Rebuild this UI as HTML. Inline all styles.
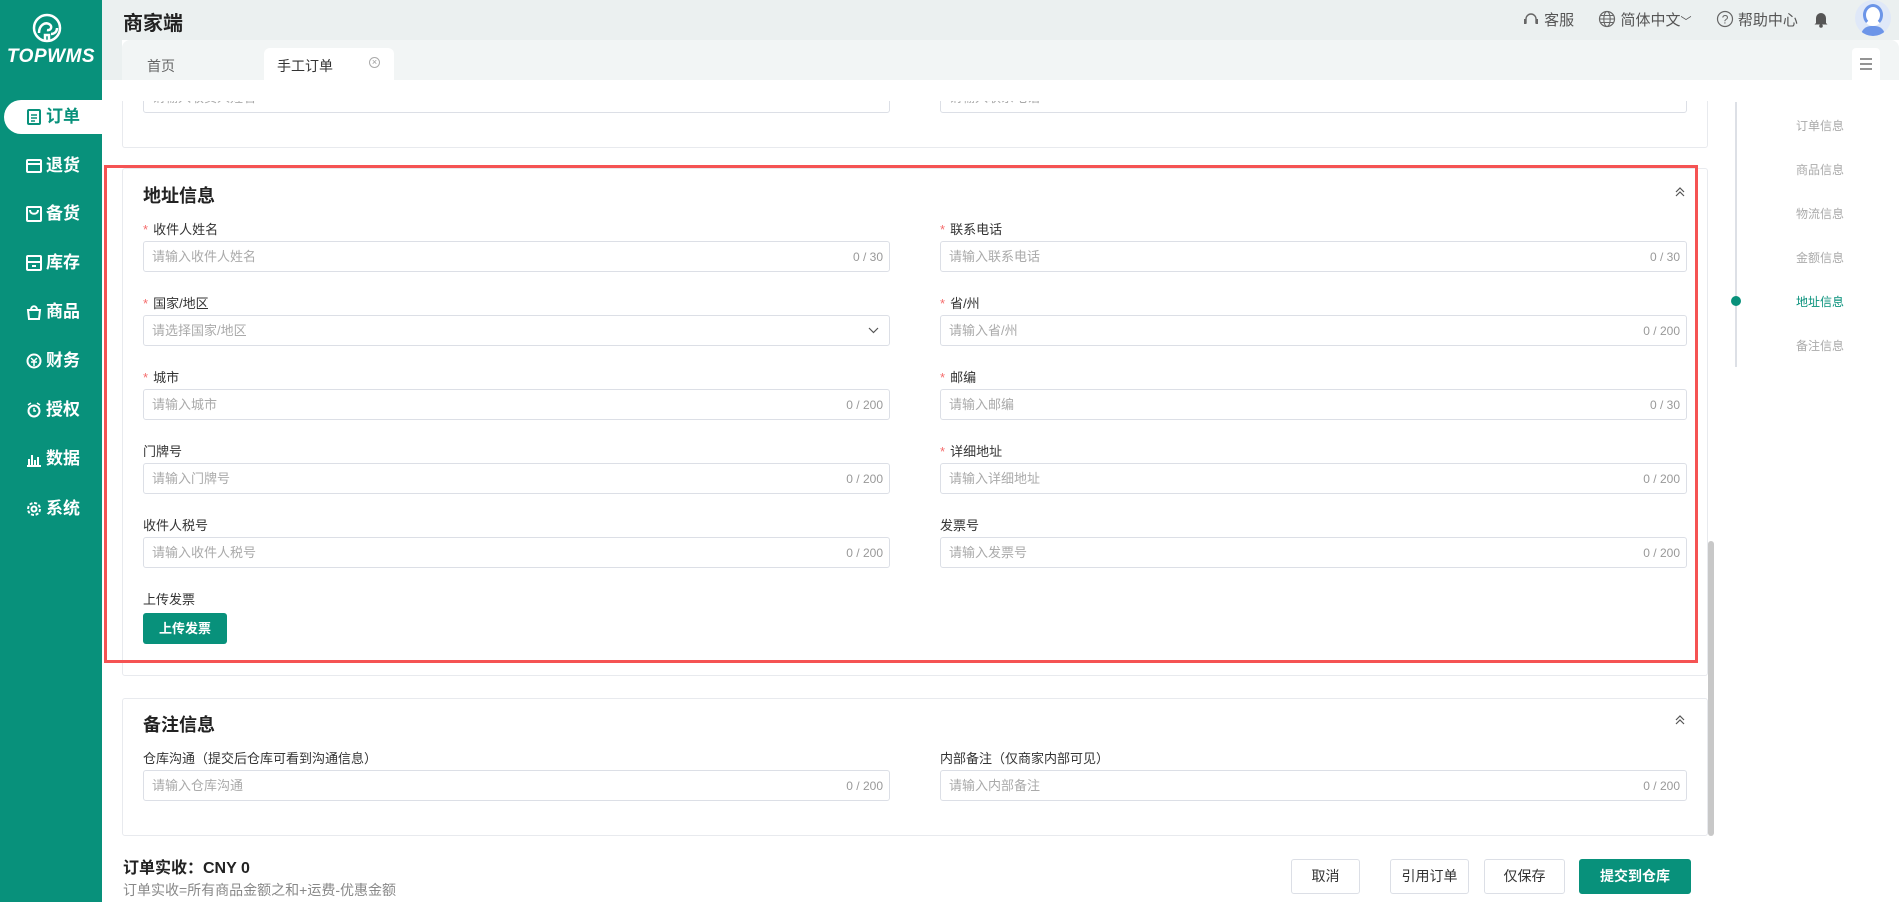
<!DOCTYPE html>
<html><head><meta charset="utf-8"><style>
*{box-sizing:border-box;margin:0;padding:0}
body{width:1899px;height:902px;overflow:hidden;position:relative;background:#fff;font-family:"Liberation Sans","Noto Sans CJK SC",sans-serif;color:#333;font-size:14px}
.abs{position:absolute}
#side{left:0;top:0;width:102px;height:902px;background:#08917b}
.mi{position:absolute;left:0;width:102px;height:34px;color:#fff;font-weight:bold;font-size:17px;line-height:34px;padding-left:26px}
.mi svg{vertical-align:-3px;margin-right:4px}
.mi.act{left:4px;width:98px;background:#fff;color:#08917b;border-radius:17px 0 0 17px;padding-left:22px}
#hdr{left:102px;top:0;width:1797px;height:40px;background:#ebf0f0}
.card{position:absolute;border:1px solid #e8eaee;border-radius:3px;background:#fff}
.lbl{position:absolute;font-size:13px;color:#333}
.lbl b{color:#f56c6c;font-weight:normal;margin-right:5px}
.inp{position:absolute;height:31px;border:1px solid #dcdfe6;border-radius:3px;font-size:13px;color:#aaa;line-height:29px;padding-left:8px}
.inp span{position:absolute;right:6px;font-size:12px;color:#999;top:1px}
.btn{position:absolute;height:35px;border:1px solid #dcdfe6;border-radius:3px;background:#fff;font-size:14px;text-align:center;line-height:33px;color:#333}
.nav{position:absolute;left:1796px;font-size:12px;color:#aaa}
</style></head><body>
<div id="side" class="abs">
 <svg class="abs" style="left:31px;top:13px" width="40" height="30" viewBox="0 0 40 30"><circle cx="16" cy="15" r="13" fill="none" stroke="#fff" stroke-width="2.5"/><path d="M8 20c0-8 6-11 10-9s2 7-2 6M14 28v-6h4v6M20 21c3 0 6-2 6-6" fill="none" stroke="#fff" stroke-width="2.5"/></svg>
 <div class="abs" style="left:6px;top:46px;width:90px;text-align:center;color:#fff;font-weight:bold;font-style:italic;font-size:19px;letter-spacing:0.5px">TOPWMS</div>
 <div class="mi act" style="top:100px"><svg width="16" height="16"><rect x="2" y="1" width="12" height="14" rx="1" fill="none" stroke="#08917b" stroke-width="2"/><path d="M5 6h6M5 9h6M5 12h4" stroke="#08917b" stroke-width="1.6"/></svg>订单</div>
 <div class="mi" style="top:149px"><svg width="16" height="16"><rect x="1" y="2" width="14" height="12" rx="1" fill="none" stroke="#fff" stroke-width="2"/><path d="M1 6h14" stroke="#fff" stroke-width="2"/></svg>退货</div>
 <div class="mi" style="top:197px"><svg width="16" height="16"><rect x="1" y="1" width="14" height="14" rx="1" fill="none" stroke="#fff" stroke-width="2"/><path d="M4 4c0 5 8 5 8 0" fill="none" stroke="#fff" stroke-width="2"/></svg>备货</div>
 <div class="mi" style="top:246px"><svg width="16" height="16"><rect x="1" y="1" width="14" height="14" rx="1" fill="none" stroke="#fff" stroke-width="2"/><path d="M1 7h14M6 11h4" stroke="#fff" stroke-width="2"/></svg>库存</div>
 <div class="mi" style="top:295px"><svg width="16" height="16"><path d="M2 6h12l-1 9H3z" fill="none" stroke="#fff" stroke-width="2"/><path d="M5 6c0-5 6-5 6 0" fill="none" stroke="#fff" stroke-width="2"/></svg>商品</div>
 <div class="mi" style="top:344px"><svg width="16" height="16"><circle cx="8" cy="8" r="6.5" fill="none" stroke="#fff" stroke-width="2"/><path d="M5 5l3 3 3-3M8 8v5M5 9h6" stroke="#fff" stroke-width="1.5" fill="none"/></svg>财务</div>
 <div class="mi" style="top:393px"><svg width="16" height="16"><circle cx="8" cy="9" r="5.5" fill="none" stroke="#fff" stroke-width="2"/><path d="M2 3l3-2M14 3l-3-2M8 6v3h2" stroke="#fff" stroke-width="1.5" fill="none"/></svg>授权</div>
 <div class="mi" style="top:442px"><svg width="16" height="16"><path d="M1 15h14M3 14V8M6 14V4M9 14V9M12 14V6" stroke="#fff" stroke-width="2"/></svg>数据</div>
 <div class="mi" style="top:492px"><svg width="16" height="16"><circle cx="8" cy="8" r="6" fill="none" stroke="#fff" stroke-width="2" stroke-dasharray="3 1.7"/><circle cx="8" cy="8" r="2.5" fill="none" stroke="#fff" stroke-width="2"/></svg>系统</div>
</div>

<!-- top card (scrolled) -->
<div class="card" style="left:122px;top:60px;width:1586px;height:88px;border-top:none"></div>
<div class="inp" style="left:143px;top:82px;width:747px">请输入收货人姓名</div>
<div class="inp" style="left:940px;top:82px;width:747px">请输入联系电话</div>
<div class="abs" style="left:102px;top:40px;width:1797px;height:61px;background:#fff"></div>

<div id="hdr" class="abs"></div>
<div class="abs" style="left:123px;top:7px;font-size:20px;font-weight:bold;color:#222">商家端</div>
<div class="abs" style="left:1522px;top:9px;font-size:15px;color:#555;white-space:nowrap">
 <svg width="18" height="18" style="vertical-align:-3px"><path d="M4 13V9a5 5 0 0 1 10 0v4" fill="none" stroke="#666" stroke-width="1.4"/><rect x="2" y="9" width="2.5" height="5" fill="#666"/><rect x="13.5" y="9" width="2.5" height="5" fill="#666"/></svg> 客服
 <span style="margin-left:20px"><svg width="18" height="18" style="vertical-align:-3px"><circle cx="9" cy="9" r="7.5" fill="none" stroke="#666" stroke-width="1.2"/><ellipse cx="9" cy="9" rx="3.2" ry="7.5" fill="none" stroke="#666" stroke-width="1.1"/><path d="M1.5 9h15M3 5.5h12M3 12.5h12" stroke="#666" stroke-width="1"/></svg> 简体中文<span style="font-size:11px">﹀</span></span>
 <span style="margin-left:20px"><svg width="18" height="18" style="vertical-align:-3px"><circle cx="9" cy="9" r="7.5" fill="none" stroke="#666" stroke-width="1.2"/><text x="5.8" y="13.5" font-size="12" fill="#666" font-family="Liberation Sans">?</text></svg> 帮助中心</span>
</div>
<svg class="abs" style="left:1813px;top:10px" width="16" height="18"><path d="M3 13V8a5 5 0 0 1 10 0v5l1.5 1.5h-13z" fill="#555"/><circle cx="8" cy="16" r="1.8" fill="#555"/></svg>
<div class="abs" style="left:1855px;top:0px;width:36px;height:36px;border-radius:50%;background:#dfe8f8;overflow:hidden"><div class="abs" style="left:8px;top:4px;width:20px;height:22px;border-radius:50%;background:#fff;border:3px solid #6c95e8;border-bottom-color:#fff"></div><div class="abs" style="left:6px;top:26px;width:24px;height:14px;border-radius:10px 10px 0 0;background:#6c95e8"></div></div>

<div class="abs" style="left:102px;top:40px;width:20px;height:40px;background:#ebf0f0"></div>
<div class="abs" style="left:122px;top:40px;width:1777px;height:40px;background:#f2f5f5;border-radius:8px 8px 0 0"></div>
<div class="abs" style="left:147px;top:56px;font-size:14px;color:#666">首页</div>
<div class="abs" style="left:264px;top:48px;width:130px;height:32px;background:#fff;border-radius:6px 6px 0 0"></div>
<div class="abs" style="left:277px;top:56px;font-size:14px;color:#333">手工订单</div>
<div class="abs" style="left:369px;top:57px;width:11px;height:11px;border:1px solid #aaa;border-radius:50%;font-size:9px;line-height:9px;text-align:center;color:#999">×</div>
<div class="abs" style="left:1852px;top:48px;width:28px;height:32px;background:#fff;border-radius:4px 4px 0 0"></div>
<svg class="abs" style="left:1859px;top:58px" width="14" height="12"><path d="M1 1h12M1 6h12M1 11h12" stroke="#555" stroke-width="1.2"/></svg>

<!-- address card -->
<div class="card" style="left:122px;top:168px;width:1586px;height:508px"></div>
<div class="abs" style="left:143px;top:182px;font-size:18px;font-weight:bold;color:#222">地址信息</div>
<svg class="abs" style="left:1674px;top:186px" width="12" height="12"><path d="M2 6l4-4 4 4M2 10l4-4 4 4" fill="none" stroke="#555" stroke-width="1.2"/></svg>

<div class="lbl" style="left:143px;top:219px"><b>*</b>收件人姓名</div>
<div class="inp" style="left:143px;top:241px;width:747px">请输入收件人姓名<span>0 / 30</span></div>
<div class="lbl" style="left:940px;top:219px"><b>*</b>联系电话</div>
<div class="inp" style="left:940px;top:241px;width:747px">请输入联系电话<span>0 / 30</span></div>

<div class="lbl" style="left:143px;top:293px"><b>*</b>国家/地区</div>
<div class="inp" style="left:143px;top:315px;width:747px">请选择国家/地区<svg class="abs" style="right:10px;top:11px" width="11" height="7"><path d="M1 1l4.5 4.5L10 1" fill="none" stroke="#555" stroke-width="1.2"/></svg></div>
<div class="lbl" style="left:940px;top:293px"><b>*</b>省/州</div>
<div class="inp" style="left:940px;top:315px;width:747px">请输入省/州<span>0 / 200</span></div>

<div class="lbl" style="left:143px;top:367px"><b>*</b>城市</div>
<div class="inp" style="left:143px;top:389px;width:747px">请输入城市<span>0 / 200</span></div>
<div class="lbl" style="left:940px;top:367px"><b>*</b>邮编</div>
<div class="inp" style="left:940px;top:389px;width:747px">请输入邮编<span>0 / 30</span></div>

<div class="lbl" style="left:143px;top:441px">门牌号</div>
<div class="inp" style="left:143px;top:463px;width:747px">请输入门牌号<span>0 / 200</span></div>
<div class="lbl" style="left:940px;top:441px"><b>*</b>详细地址</div>
<div class="inp" style="left:940px;top:463px;width:747px">请输入详细地址<span>0 / 200</span></div>

<div class="lbl" style="left:143px;top:515px">收件人税号</div>
<div class="inp" style="left:143px;top:537px;width:747px">请输入收件人税号<span>0 / 200</span></div>
<div class="lbl" style="left:940px;top:515px">发票号</div>
<div class="inp" style="left:940px;top:537px;width:747px">请输入发票号<span>0 / 200</span></div>

<div class="lbl" style="left:143px;top:589px">上传发票</div>
<div class="abs" style="left:143px;top:613px;width:84px;height:31px;background:#08917b;border-radius:3px;color:#fff;font-size:13px;font-weight:bold;text-align:center;line-height:31px">上传发票</div>

<div class="abs" style="left:104px;top:165px;width:1594px;height:498px;border:3px solid #f55353"></div>

<!-- remarks card -->
<div class="card" style="left:122px;top:698px;width:1586px;height:138px"></div>
<div class="abs" style="left:143px;top:711px;font-size:18px;font-weight:bold;color:#222">备注信息</div>
<svg class="abs" style="left:1674px;top:714px" width="12" height="12"><path d="M2 6l4-4 4 4M2 10l4-4 4 4" fill="none" stroke="#555" stroke-width="1.2"/></svg>
<div class="lbl" style="left:143px;top:748px">仓库沟通（提交后仓库可看到沟通信息）</div>
<div class="inp" style="left:143px;top:770px;width:747px">请输入仓库沟通<span>0 / 200</span></div>
<div class="lbl" style="left:940px;top:748px">内部备注（仅商家内部可见）</div>
<div class="inp" style="left:940px;top:770px;width:747px">请输入内部备注<span>0 / 200</span></div>

<div class="abs" style="left:1708px;top:541px;width:6px;height:295px;background:#c8c8c8;border-radius:3px"></div>

<!-- anchor nav -->
<div class="abs" style="left:1735px;top:102px;width:2px;height:265px;background:#dde0e6"></div>
<div class="abs" style="left:1731px;top:296px;width:10px;height:10px;border-radius:50%;background:#08917b"></div>
<div class="nav" style="top:117px">订单信息</div>
<div class="nav" style="top:161px">商品信息</div>
<div class="nav" style="top:205px">物流信息</div>
<div class="nav" style="top:249px">金额信息</div>
<div class="nav" style="top:293px;color:#08917b">地址信息</div>
<div class="nav" style="top:337px">备注信息</div>

<!-- footer -->
<div class="abs" style="left:123px;top:854px;font-size:16px;font-weight:bold;color:#222">订单实收：CNY 0</div>
<div class="abs" style="left:123px;top:880px;font-size:14px;color:#888">订单实收=所有商品金额之和+运费-优惠金额</div>
<div class="btn" style="left:1291px;top:859px;width:69px">取消</div>
<div class="btn" style="left:1390px;top:859px;width:79px">引用订单</div>
<div class="btn" style="left:1484px;top:859px;width:81px">仅保存</div>
<div class="btn" style="left:1579px;top:859px;width:112px;background:#08917b;border-color:#08917b;color:#fff;font-weight:bold">提交到仓库</div>
</body></html>
